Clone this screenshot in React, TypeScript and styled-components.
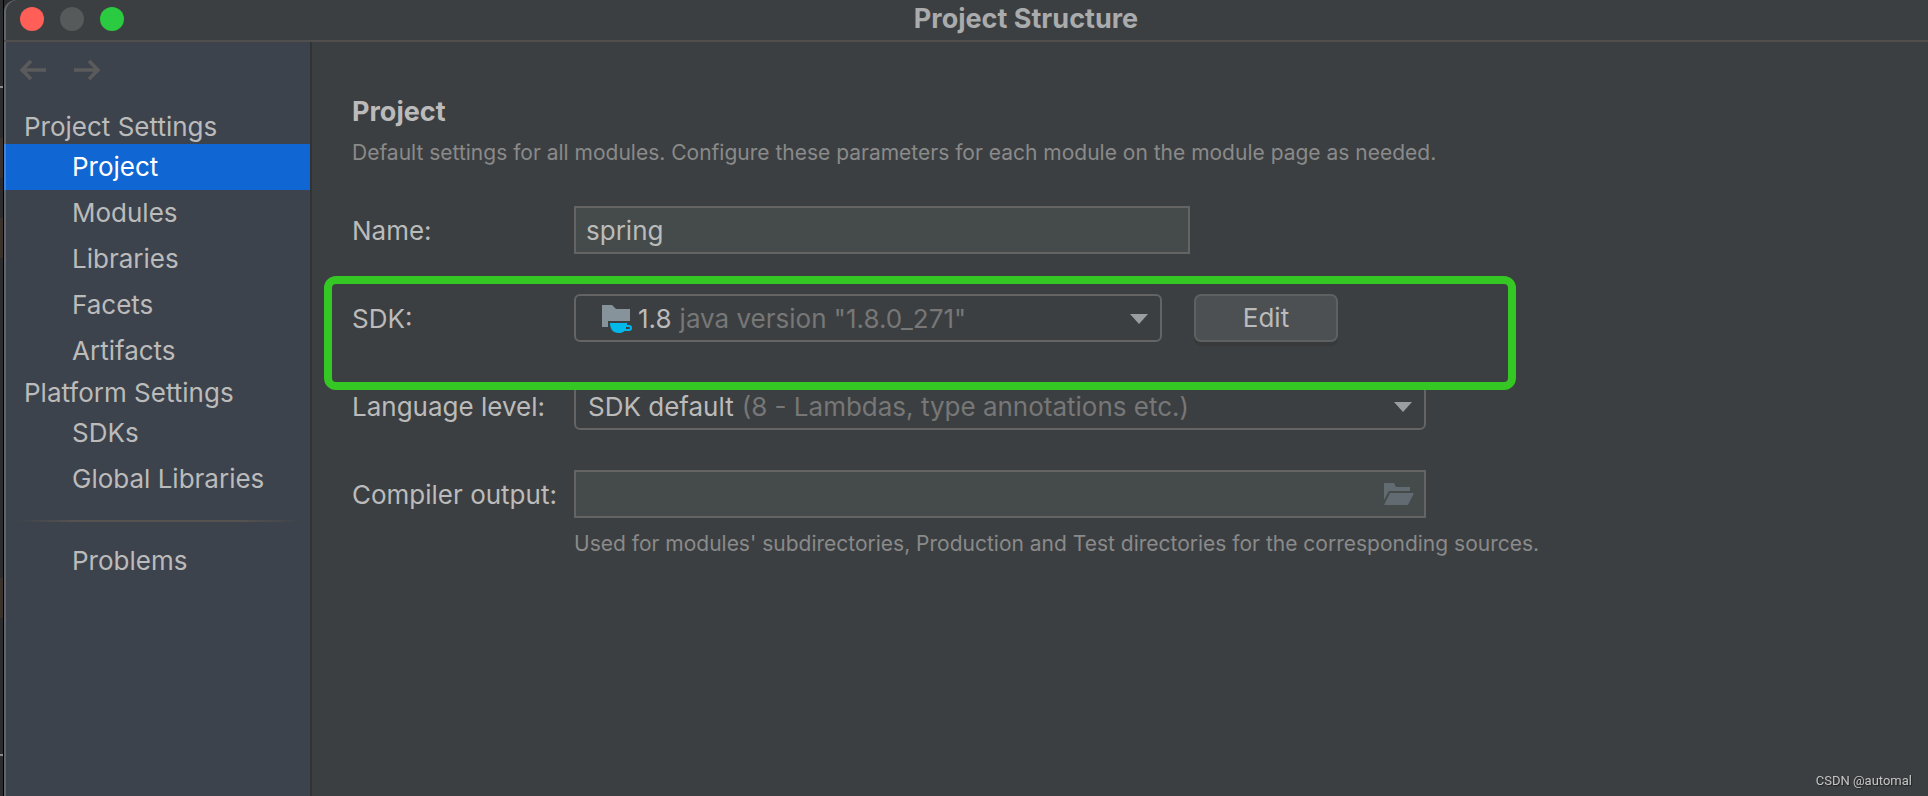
import React from "react";
import styled, { createGlobalStyle } from "styled-components";

const GlobalStyle = createGlobalStyle`
  *, *::before, *::after { box-sizing: border-box; }
  body {
    margin: 0;
    background: #2a2c2d;
    color: #bbbbbb;
    font-family: Inter, "Liberation Sans", sans-serif;
    font-size: 26px;
    line-height: 32px;
  }
  button, input, select { font: inherit; color: inherit; }
`;

const Desktop = styled.div`
  display: flex;
  min-height: 100vh;
`;

const EditorStrip = styled.div`
  flex: none;
  width: 4px;
  border-right: 1px solid #000;
  background: linear-gradient(
    #2a2c2d 0 86px, #8a8a88 86px 88px, #2a2c2d 88px 138px, #3b332b 138px 178px,
    #2a2c2d 178px 218px, #3b332b 218px 258px, #2a2c2d 258px 578px, #3b332b 578px 618px,
    #2a2c2d 618px 754px, #8a8a88 754px 756px, #2a2c2d 756px
  );
`;

const Window = styled.div`
  flex: 1;
  min-width: 0;
  display: flex;
  flex-direction: column;
  background: #3c3f41;
  border-top-left-radius: 12px;
  box-shadow: inset 2px 0 0 #62666c;
`;

const TitleBar = styled.header`
  display: flex;
  align-items: center;
  height: 42px;
  padding: 0 0 2px 16px;
  border-bottom: 2px solid #514f4d;
`;

const Lights = styled.div`
  display: flex;
  gap: 16px;
`;

const Light = styled.button<{ $color: string }>`
  width: 24px;
  height: 24px;
  padding: 0;
  border: 0;
  border-radius: 50%;
  background: ${(p) => p.$color};
`;

const WindowTitle = styled.h1`
  flex: 1;
  margin: 0;
  font-size: 27px;
  line-height: 32px;
  font-weight: 700;
  text-align: center;
  color: #a9abac;
`;

const Body = styled.div`
  flex: 1;
  display: flex;
`;

const Sidebar = styled.nav`
  flex: none;
  width: 308px;
  border-right: 2px solid #323333;
  border-left: 2px solid #62666c;
  background: #3d434c;
`;

const History = styled.div`
  display: flex;
  gap: 28px;
  padding: 18px 14px 28px;
`;

const HistoryButton = styled.button`
  display: flex;
  padding: 0;
  border: 0;
  background: none;
  color: #5b5b5b;
`;

const GroupTitle = styled.h2`
  margin: 0;
  padding: 2px 0 0 18px;
  font-size: 26px;
  font-weight: 400;
  line-height: 34px;
`;

const Items = styled.ul`
  margin: 0;
  padding: 0;
  list-style: none;
`;

const ItemLink = styled.a<{ $active?: boolean }>`
  display: block;
  margin-left: -2px;
  padding-left: 66px;
  border-left: 2px solid ${(p) => (p.$active ? "#4384da" : "transparent")};
  line-height: 46px;
  text-decoration: none;
  color: ${(p) => (p.$active ? "#ffffff" : "#bbbbbb")};
  background: ${(p) => (p.$active ? "#1067d3" : "transparent")};
`;

const Separator = styled.hr`
  height: 2px;
  margin: 18px 10px 16px;
  border: 0;
  background: linear-gradient(90deg, transparent, #555250 20%, #555250 80%, transparent);
`;

const Content = styled.main`
  flex: 1;
  min-width: 0;
  padding: 54px 40px;
`;

const SectionTitle = styled.h2`
  margin: 0 0 11px;
  font-size: 27px;
  line-height: 32px;
  font-weight: 700;
`;

const Hint = styled.p`
  margin: 0;
  font-size: 21px;
  line-height: 28px;
  color: #8a8a8a;
`;

const Form = styled.form`
  display: grid;
  gap: 40px;
  margin-top: 39px;
`;

const Row = styled.div`
  position: relative;
  display: grid;
  grid-template-columns: 222px minmax(0, 1fr);
  align-items: center;
`;

const Label = styled.label`
  padding-top: 2px;
`;

const Field = styled.div<{ $width: number }>`
  display: grid;
  align-items: center;
  width: 100%;
  max-width: ${(p) => p.$width}px;
`;

const TextInput = styled.input`
  grid-area: 1 / 1;
  width: 100%;
  height: 48px;
  padding: 0 10px;
  border: 2px solid #646464;
  border-radius: 0;
  outline: 0;
  background: #444b4a;
`;

const Select = styled.select`
  grid-area: 1 / 1;
  width: 100%;
  height: 48px;
  appearance: none;
  border: 2px solid #646464;
  border-radius: 6px;
  background: #3c3f41;
  color: transparent;
`;

const SelectedValue = styled.div<{ $indent: number }>`
  grid-area: 1 / 1;
  z-index: 1;
  display: flex;
  align-items: center;
  gap: 8px;
  padding: 2px 14px 0 ${(p) => p.$indent}px;
  white-space: nowrap;
  pointer-events: none;
`;

const Muted = styled.span`
  flex: 1;
  color: #777777;
`;

const FolderButton = styled.button`
  grid-area: 1 / 1;
  justify-self: end;
  display: flex;
  margin-right: 12px;
  padding: 0;
  border: 0;
  background: none;
`;

const SdkControls = styled.div`
  display: flex;
  gap: 32px;
`;

const Button = styled.button`
  flex: none;
  width: 144px;
  height: 48px;
  border: 2px solid #5e6162;
  border-radius: 7px;
  background: #4c5052;
  box-shadow: 0 4px 0 #37393a;
`;

const Highlight = styled.div`
  position: absolute;
  top: -18px;
  left: -28px;
  z-index: 2;
  width: 1192px;
  height: 114px;
  border: 8px solid #35c724;
  border-radius: 12px;
  pointer-events: none;
`;

const OutputHint = styled(Hint)`
  grid-column: 2;
  margin-top: 12px;
`;

const Watermark = styled.footer`
  position: fixed;
  right: 16px;
  bottom: 6px;
  font-family: Roboto, "Liberation Sans", sans-serif;
  font-size: 13px;
  line-height: 18px;
  color: #c4c5c5;
  text-shadow: 1px 1px 1px #222;
`;

const Chevron = () => (
  <svg width="18" height="10" viewBox="0 0 18 10" aria-hidden="true">
    <path d="M0 0H18L9 10Z" fill="#9b9ea1" />
  </svg>
);

const ArrowIcon = ({ flip }: { flip?: boolean }) => (
  <svg width="26" height="20" viewBox="0 0 26 20" aria-hidden="true">
    <path
      d={flip ? "M0 10H24M15 1L24 10L15 19" : "M26 10H2M11 1L2 10L11 19"}
      fill="none"
      stroke="currentColor"
      strokeWidth="3.6"
    />
  </svg>
);

const SdkIcon = () => (
  <svg width="28" height="28" viewBox="0 0 28 28" overflow="visible" aria-hidden="true">
    <path d="M0 0H10L14 4H28V16H6V22H0Z" fill="#87939a" />
    <path
      fillRule="evenodd"
      d="M8 18H25V20H27A3 3 0 0 1 27 26H22.500C21 27.500 19 28 16.500 28C11 28 8 24 8 18ZM24 22V24H27A1 1 0 0 0 27 22Z"
      fill="#00b8ea"
    />
  </svg>
);

const OpenFolderIcon = () => (
  <svg width="30" height="22" viewBox="0 0 30 22" aria-hidden="true">
    <path d="M0 0H10L12 4H26V8H5L0 17Z" fill="#626b72" />
    <path d="M6 10H30L24 22H0Z" fill="#626b72" />
  </svg>
);

const projectItems = ["Project", "Modules", "Libraries", "Facets", "Artifacts"];
const platformItems = ["SDKs", "Global Libraries"];

const NavList = ({ items, active }: { items: string[]; active?: string }) => (
  <Items>
    {items.map((item) => (
      <li key={item}>
        <ItemLink
          href={"#" + item.toLowerCase().replace(" ", "-")}
          $active={item === active}
          aria-current={item === active ? "page" : undefined}
        >
          {item}
        </ItemLink>
      </li>
    ))}
  </Items>
);

export default function App() {
  return (
    <>
      <GlobalStyle />
      <Desktop>
        <EditorStrip />
        <Window>
          <TitleBar>
            <Lights>
              <Light type="button" aria-label="Close" $color="#ff5f57" />
              <Light type="button" aria-label="Minimize" $color="#575a5b" />
              <Light type="button" aria-label="Zoom" $color="#2aca41" />
            </Lights>
            <WindowTitle>Project Structure</WindowTitle>
          </TitleBar>
          <Body>
            <Sidebar>
              <History>
                <HistoryButton type="button" aria-label="Back"><ArrowIcon /></HistoryButton>
                <HistoryButton type="button" aria-label="Forward"><ArrowIcon flip /></HistoryButton>
              </History>
              <GroupTitle>Project Settings</GroupTitle>
              <NavList items={projectItems} active="Project" />
              <GroupTitle>Platform Settings</GroupTitle>
              <NavList items={platformItems} />
              <Separator />
              <NavList items={["Problems"]} />
            </Sidebar>
            <Content>
              <SectionTitle>Project</SectionTitle>
              <Hint>
                Default settings for all modules. Configure these parameters for each module on the
                module page as needed.
              </Hint>
              <Form onSubmit={(e) => e.preventDefault()}>
                <Row>
                  <Label htmlFor="name">Name:</Label>
                  <Field $width={616}>
                    <TextInput id="name" defaultValue="spring" />
                  </Field>
                </Row>
                <Row>
                  <Label htmlFor="sdk">SDK:</Label>
                  <SdkControls>
                    <Field $width={588}>
                      <Select id="sdk">
                        <option>1.8 java version "1.8.0_271"</option>
                      </Select>
                      <SelectedValue $indent={28} aria-hidden="true">
                        <SdkIcon />
                        <span>1.8</span>
                        <Muted>java version "1.8.0_271"</Muted>
                        <Chevron />
                      </SelectedValue>
                    </Field>
                    <Button type="button">Edit</Button>
                  </SdkControls>
                  <Highlight />
                </Row>
                <Row>
                  <Label htmlFor="level">Language level:</Label>
                  <Field $width={852}>
                    <Select id="level">
                      <option>SDK default (8 - Lambdas, type annotations etc.)</option>
                    </Select>
                    <SelectedValue $indent={14} aria-hidden="true">
                      <span>SDK default</span>
                      <Muted>(8 - Lambdas, type annotations etc.)</Muted>
                      <Chevron />
                    </SelectedValue>
                  </Field>
                </Row>
                <Row>
                  <Label htmlFor="output">Compiler output:</Label>
                  <Field $width={852}>
                    <TextInput id="output" />
                    <FolderButton type="button" aria-label="Browse"><OpenFolderIcon /></FolderButton>
                  </Field>
                  <OutputHint>
                    Used for modules' subdirectories, Production and Test directories for the
                    corresponding sources.
                  </OutputHint>
                </Row>
              </Form>
            </Content>
          </Body>
        </Window>
      </Desktop>
      <Watermark>CSDN @automal</Watermark>
    </>
  );
}
